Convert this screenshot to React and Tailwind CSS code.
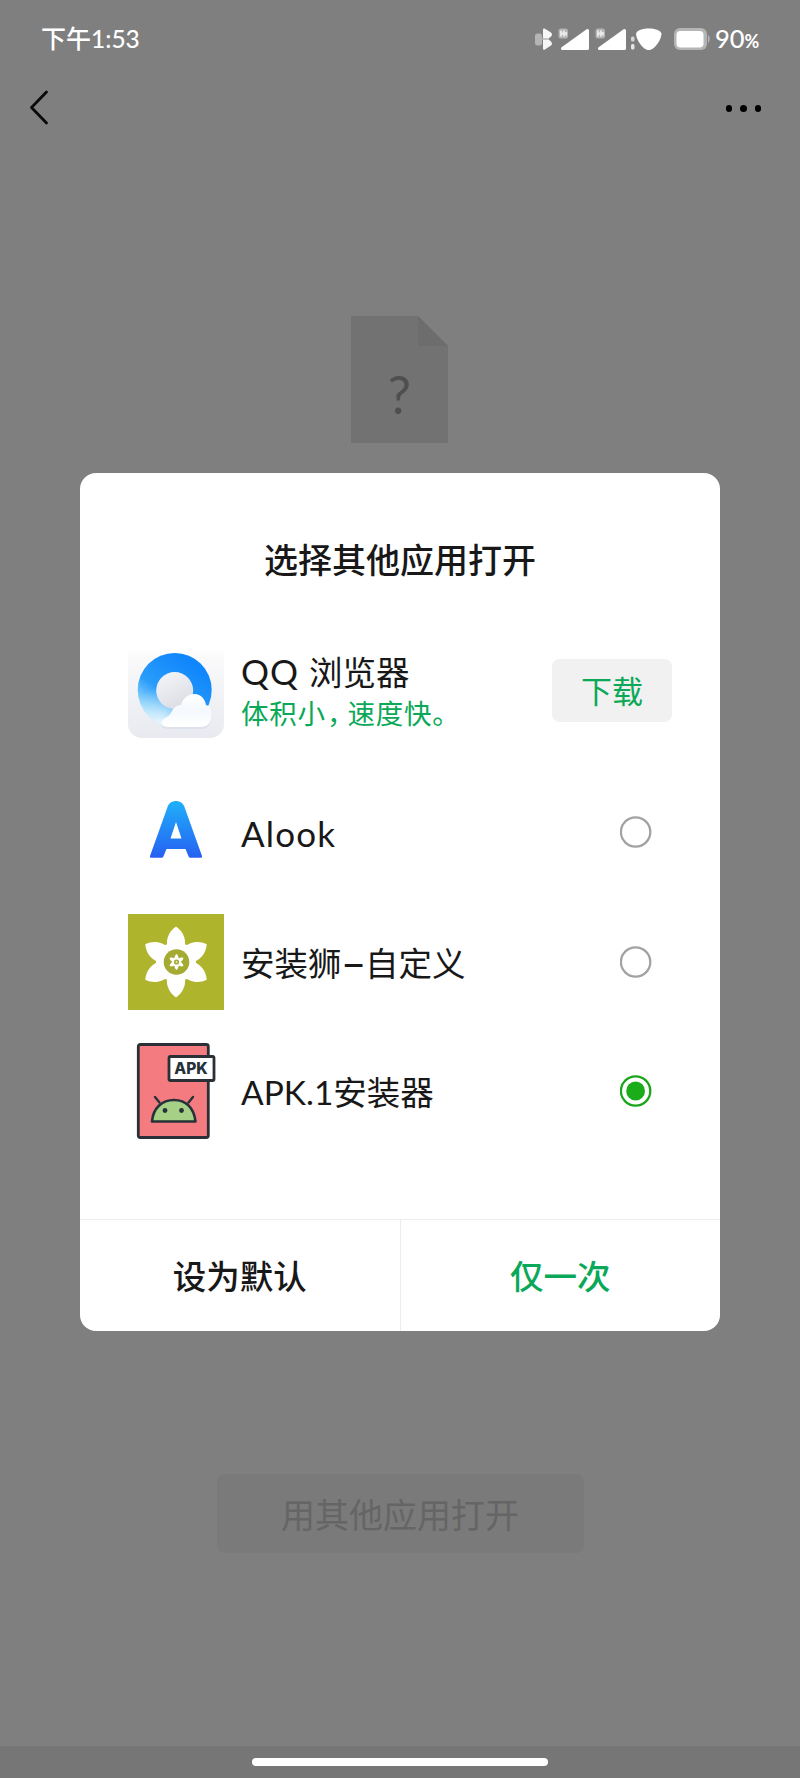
function BluetoothIcon() {
    return (
        <svg className="h-6 w-5" viewBox="0 0 20 24">
            <rect x="1" y="6.5" width="7" height="12" rx="2.5" fill="#b4b4b4" />
            <path d="M9 2.5Q9 1 10.5 1.5L17 5.5Q19 7.5 17 9.500L14 12L17 14.500Q19 17 17 18.500L10.500 22.800Q9 23.200 9 21.500Z" fill="#f6f6f6" />
            <path d="M8 12H14" stroke="#b4b4b4" strokeWidth="1.5" />
        </svg>
    );
}

function SignalIcon() {
    return (
        <svg className="h-6 w-8" viewBox="0 0 32 24">
            <rect x="0.5" y="1.5" width="9.5" height="10" rx="2.5" fill="#b4b4b4" />
            <path d="M3 3.5V9.5M3 6.5H6M6 3.5V9.5M8 5V8.5" stroke="#ececec" strokeWidth="1.8" fill="none" />
            <path d="M4.500 21.500L29.500 21.500V3.500Z" fill="#fff" stroke="#fff" strokeWidth="3" strokeLinejoin="round" />
        </svg>
    );
}

function WifiIcon() {
    return (
        <svg className="h-6 w-8" viewBox="0 0 32 24">
            <rect x="1" y="9.500" width="3.500" height="5" rx="1.500" fill="#d6d6d6" />
            <rect x="1" y="17" width="3.500" height="5.500" rx="1.500" fill="#e6e6e6" />
            <path d="M6 6.500C8 -0.300 29.500 -0.300 31.500 6.500C31.500 12 25 23 18.700 23C12.500 23 6 12 6 6.500Z" fill="#fff" />
        </svg>
    );
}

function BatteryIcon() {
    return (
        <svg className="h-6 w-[38px]" viewBox="0 0 38 24">
            <rect x="1" y="1" width="33" height="22" rx="6" fill="#b5b5b5" />
            <path d="M35 7.500Q38.500 12 35 16.500Z" fill="#b5b5b5" />
            <rect x="3.500" y="4" width="27" height="16.500" rx="4" fill="#fff" />
        </svg>
    );
}

function QQBrowserIcon() {
    return (
        <svg className="size-24" viewBox="0 0 96 96">
            <defs>
                <linearGradient id="qqBg" x1="0" y1="0" x2="0" y2="1">
                    <stop offset="0.05" stopColor="#ffffff" />
                    <stop offset="0.15" stopColor="#fafafb" />
                    <stop offset="1" stopColor="#e8eaf0" />
                </linearGradient>
                <linearGradient id="qqRing" x1="0.75" y1="0.15" x2="0.2" y2="0.95">
                    <stop offset="0" stopColor="#0f86fb" />
                    <stop offset="0.55" stopColor="#2a9cfb" />
                    <stop offset="0.85" stopColor="#8bd3fb" />
                    <stop offset="1" stopColor="#d3eefb" />
                </linearGradient>
                <linearGradient id="qqHole" x1="0.3" y1="0" x2="0.8" y2="1">
                    <stop offset="0" stopColor="#f3f4f7" />
                    <stop offset="1" stopColor="#d9dbe2" />
                </linearGradient>
                <linearGradient id="qqCloud" x1="0.2" y1="0" x2="0.2" y2="1">
                    <stop offset="0" stopColor="#ffffff" />
                    <stop offset="0.5" stopColor="#f5f9fd" />
                    <stop offset="1" stopColor="#ffffff" />
                </linearGradient>
                <radialGradient id="qqFade" cx="0.3" cy="0.98" r="0.5">
                    <stop offset="0" stopColor="#eef8fd" />
                    <stop offset="1" stopColor="#c5e8fc" stopOpacity="0" />
                </radialGradient>
            </defs>
            <rect width="96" height="95" rx="14" fill="url(#qqBg)" />
            <circle cx="46.700" cy="47" r="37" fill="url(#qqRing)" />
            <circle cx="46.700" cy="47" r="37" fill="url(#qqFade)" />
            <circle cx="46.700" cy="47.500" r="18.500" fill="url(#qqHole)" />
            <path
                d="M40 84C33 84 31 78 37 75C41 73 42 72 44 68C46 64 49 62.500 53 62C55 55 60 51 66.500 51C73 51 77 56 78 62C83 63 84 68 83 74C83 80 79 84 73 84Z"
                fill="#7fa2c8"
                opacity="0.12"
                transform="translate(0 2)"
            />
            <path
                d="M40 84C33 84 31 78 37 75C41 73 42 72 44 68C46 64 49 62.500 53 62C55 55 60 51 66.500 51C73 51 77 56 78 62C83 63 84 68 83 74C83 80 79 84 73 84Z"
                fill="url(#qqCloud)"
            />
        </svg>
    );
}

function AlookIcon() {
    return (
        <svg className="size-24" viewBox="0 0 96 96">
            <defs>
                <linearGradient id="alook" x1="0" y1="0" x2="0" y2="1">
                    <stop offset="0" stopColor="#1fb0fb" />
                    <stop offset="1" stopColor="#2660f2" />
                </linearGradient>
            </defs>
            <path
                fillRule="evenodd"
                d="M39.500 23C42 15 54 15 56.500 23L74 72Q74.600 73.800 73 73.800H62.500Q61 73.800 60.500 72.300L57.500 65H38.500L35.500 72.300Q35 73.800 33.500 73.800H23Q21.400 73.800 22 72ZM48 38L42.500 54.500H53.500Z"
                fill="url(#alook)"
            />
        </svg>
    );
}

function FlowerIcon() {
    const angles = [0, 60, 120, 180, 240, 300];
    return (
        <svg className="size-24" viewBox="0 0 96 96">
            <rect width="96" height="96" fill="#aeb42c" />
            {angles.map((a) => (
                <path
                    key={a}
                    d="M48 12.500C56 18 59 27 56 36L50 48H46L40 36C37 27 40 18 48 12.500Z"
                    transform={`rotate(${a} 48 48)`}
                    fill="#fff"
                />
            ))}
            <circle cx="48" cy="48" r="20" fill="#fff" />
            <circle cx="48.500" cy="48" r="12.800" fill="#a5ab32" />
            {angles.map((a) => (
                <path
                    key={a}
                    d="M48.500 40C51 42 51 45 48.500 48C46 45 46 42 48.500 40Z"
                    transform={`rotate(${a} 48.500 48)`}
                    fill="#fff"
                />
            ))}
            <circle cx="48.500" cy="48" r="4.500" fill="#fff" />
            <circle cx="48.500" cy="48" r="2.600" fill="#a5ab32" />
            <circle cx="48.500" cy="48" r="1" fill="#e9ebc8" />
        </svg>
    );
}

function ApkIcon() {
    return (
        <svg className="size-24" viewBox="0 0 96 96">
            <rect x="10.300" y="1.500" width="70" height="93" rx="2" fill="#f47c80" stroke="#2b3036" strokeWidth="2.800" />
            <rect x="41" y="13.500" width="45" height="24" rx="1.500" fill="#fff" stroke="#2b3036" strokeWidth="2.800" />
            <text x="63" y="31" textAnchor="middle" fill="#263238" className="font-['Inter'] text-[15.500px] font-extrabold">
                APK
            </text>
            <path d="M31.500 59.500L27 54M60.500 59.500L65 54" stroke="#263238" strokeWidth="2.400" strokeLinecap="round" />
            <path d="M24 78.500C25 65 34 57 46 57C58 57 66 65 67.500 78.500Z" fill="#a5d086" stroke="#263238" strokeWidth="2.600" strokeLinejoin="round" />
            <circle cx="37" cy="67.500" r="2.400" fill="#263238" />
            <circle cx="53.500" cy="67.500" r="2.400" fill="#263238" />
        </svg>
    );
}

function Radio({ checked }) {
    return (
        <svg className="mr-5 size-8" viewBox="0 0 32 32" fill="none">
            <circle cx="15.600" cy="16" r="14.700" stroke={checked ? "#1aa51a" : "#a2a2a2"} strokeWidth="2.300" />
            {checked && <circle cx="15.600" cy="16" r="9.400" fill="#1aad19" />}
        </svg>
    );
}

function AppRow({ icon, children, checked }) {
    return (
        <li className="flex h-[129.500px] items-center">
            {icon}
            <span className="ml-[17px] flex-1 whitespace-nowrap pt-[3px] text-[33.500px] leading-none">{children}</span>
            <Radio checked={checked} />
        </li>
    );
}

function App() {
    return (
        <div className="relative flex h-[1778px] w-[800px] flex-col overflow-hidden bg-[#7f7f7f] font-['Lato','Noto_Sans_CJK_SC',sans-serif]">
            {/* status bar */}
            <div className="flex h-[77px] items-center justify-between pl-[41px] pr-[40px] text-[25px] font-medium leading-none text-white">
                <span>
                    <span className="font-['Noto_Sans_CJK_SC']">下午</span>
                    <span className="text-[24.500px]">1:53</span>
                </span>
                <div className="flex items-center">
                    <BluetoothIcon />
                    <div className="ml-1 flex gap-[5px]">
                        <SignalIcon />
                        <SignalIcon />
                    </div>
                    <div className="ml-[3px] mr-[11px]">
                        <WifiIcon />
                    </div>
                    <BatteryIcon />
                    <span className="ml-1 w-[45px] whitespace-nowrap text-[25.500px]">
                        90<span className="text-[18px] font-bold">%</span>
                    </span>
                </div>
            </div>

            {/* nav */}
            <div className="flex h-[61px] items-center justify-between pl-[29px] pr-[39px]">
                <svg className="h-10 w-5" viewBox="0 0 20 40" fill="none" stroke="#0a0a0a" strokeWidth="2.800" strokeLinecap="round" strokeLinejoin="round">
                    <path d="M17.500 4L2.500 19.500L17.500 35" />
                </svg>
                <div className="flex gap-2 pt-[2px]">
                    <span className="size-[6.500px] rounded-full bg-black" />
                    <span className="size-[6.500px] rounded-full bg-black" />
                    <span className="size-[6.500px] rounded-full bg-black" />
                </div>
            </div>

            {/* unknown file */}
            <div className="mt-[178px] flex justify-center pr-[2px]">
                <svg className="h-[127px] w-[97px]" viewBox="0 0 97 127">
                    <path d="M0 0H67L97 30V127H0Z" fill="#727272" />
                    <path d="M67 0L97 30H67Z" fill="#6d6d6d" />
                    <text x="48.500" y="98" textAnchor="middle" fill="#4f4f4f" className="font-['Lato'] text-[52px]">
                        ?
                    </text>
                </svg>
            </div>

            <div className="mx-auto mt-auto mb-[193px] flex h-[79px] w-[367px] items-center justify-center rounded-lg bg-[#7a7a7a] pt-[2px] text-[34px] leading-none text-[#656565]">
                用其他应用打开
            </div>

            <div className="flex h-[32px] justify-center bg-[#767676] pt-3">
                <div className="h-2 w-[296px] rounded-full bg-white" />
            </div>

            {/* dialog */}
            <div className="absolute inset-x-20 top-[473px] flex h-[858px] flex-col rounded-2xl bg-white text-[#181818]">
                <h2 className="mt-[70px] text-center text-[34px] font-medium leading-[34px]">选择其他应用打开</h2>
                <ul className="px-12 pt-[49px]">
                    <li className="mb-3 flex h-[129.500px] items-center">
                        <QQBrowserIcon />
                        <div className="ml-[17px] flex-1 whitespace-nowrap pt-[3px]">
                            <div className="text-[33.500px] leading-[42px]">
                                <span className="text-[35px] tracking-[1px]">QQ </span>浏览器
                            </div>
                            <div className="text-[27.500px] leading-[41px] tracking-[0.800px] text-[#0aa858]">
                                体积小<span className="ml-px mr-[6px] [font-feature-settings:'halt']">，</span>速度快。
                            </div>
                        </div>
                        <button className="h-[63px] w-[120px] rounded-lg bg-[#f1f1f1] pt-[2px] text-[31px] leading-none text-[#0aa858]">下载</button>
                    </li>
                    <AppRow icon={<AlookIcon />}>
                        <span className="text-[35px] tracking-[1.200px]">Alook</span>
                    </AppRow>
                    <AppRow icon={<FlowerIcon />}>
                        安装狮<span className="inline-block scale-x-130 px-[2px] font-bold">–</span>自定义
                    </AppRow>
                    <AppRow icon={<ApkIcon />} checked>APK.1安装器</AppRow>
                </ul>
                <div className="mt-auto flex h-[112px] border-t border-[#ececec] text-[33.500px] font-medium leading-none">
                    <button className="flex-1 border-r border-[#ececec] pt-[3px]">设为默认</button>
                    <button className="flex-1 pt-[3px] text-[#0aa858]">仅一次</button>
                </div>
            </div>
        </div>
    );
}

export default App;
